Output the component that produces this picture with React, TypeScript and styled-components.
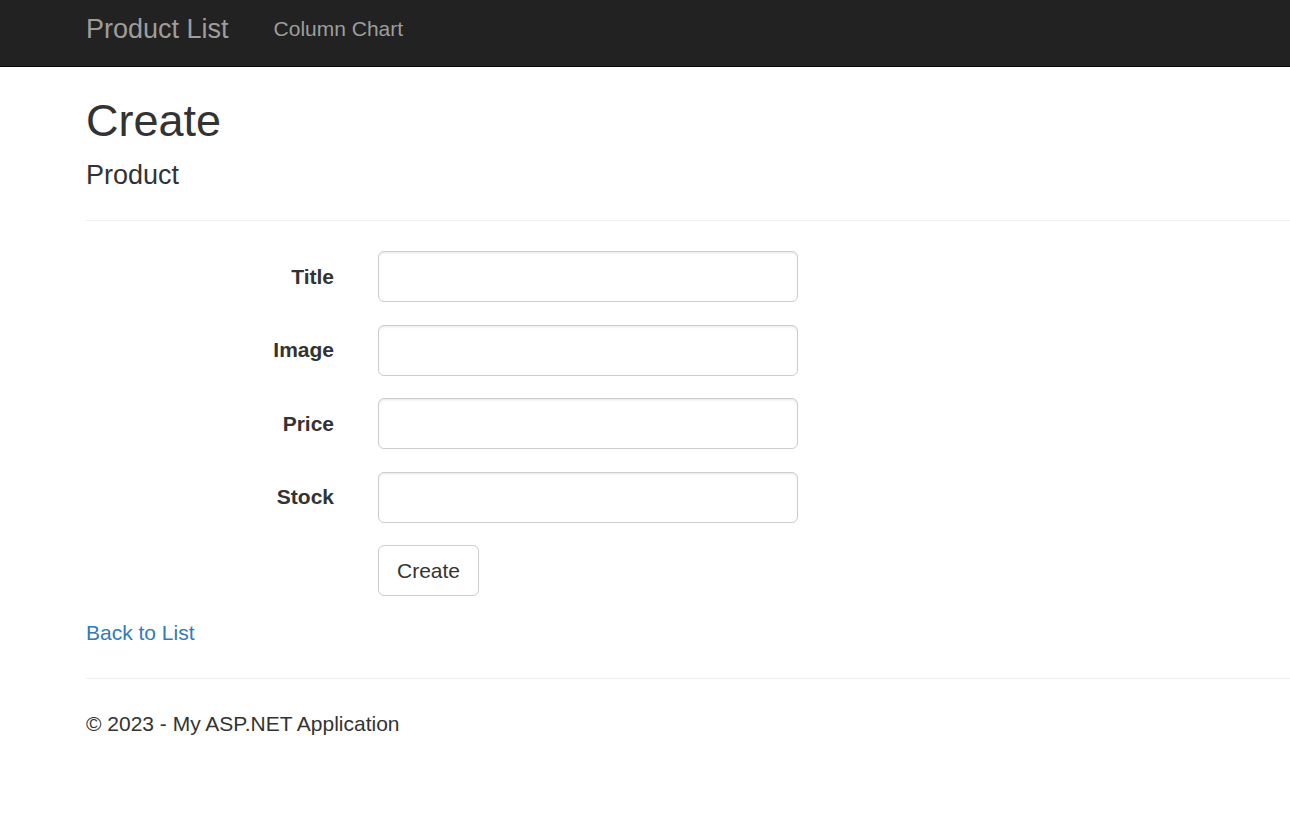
import React from "react";
import styled, { createGlobalStyle } from "styled-components";

const GlobalStyle = createGlobalStyle`
  html, body {
    margin: 0;
    padding: 0;
    background: #fff;
    overflow: hidden;
  }
  body {
    font-family: "Liberation Sans", Arial, Helvetica, sans-serif;
    font-size: 21px;
    line-height: 30px;
    color: #333;
  }
  * { box-sizing: border-box; }
`;

const Navbar = styled.nav`
  height: 67px;
  background: #222;
  border-bottom: 1px solid #080808;
`;

const NavContainer = styled.div`
  display: flex;
  align-items: flex-start;
  padding: 14px 0 0 86px;
`;

const Brand = styled.a`
  font-size: 27px;
  line-height: 30px;
  color: #9d9d9d;
  text-decoration: none;
  margin-right: 45px;
`;

const NavLink = styled.a`
  font-size: 21px;
  line-height: 30px;
  color: #9d9d9d;
  text-decoration: none;
`;

const Container = styled.main`
  padding-left: 86px;
`;

const PageTitle = styled.h2`
  margin: 29px 0 15px;
  font-size: 45px;
  line-height: 49.5px;
  font-weight: 500;
`;

const SubTitle = styled.h4`
  margin: 15px 0 15px;
  font-size: 27px;
  line-height: 29.7px;
  font-weight: 500;
`;

const Rule = styled.hr`
  margin: 30px 0;
  border: 0;
  border-top: 1px solid #eee;
  height: 0;
`;

const FormGroup = styled.div<{ $last?: boolean }>`
  display: grid;
  grid-template-columns: 248px 420px;
  column-gap: 44px;
  margin-bottom: ${(p) => (p.$last ? "21.5px" : "22.5px")};
`;

const Label = styled.label`
  text-align: right;
  font-weight: bold;
  padding-top: 10.5px;
  line-height: 30px;
`;

const Input = styled.input`
  height: 51px;
  width: 420px;
  padding: 9px 18px;
  font-family: inherit;
  font-size: 21px;
  color: #555;
  border: 1px solid #ccc;
  border-radius: 6px;
  box-shadow: inset 0 1.5px 1.5px rgba(0, 0, 0, 0.075);
  background: #fff;
  outline: none;
`;

const Button = styled.button`
  justify-self: start;
  height: 51px;
  padding: 9px 18px;
  font-family: inherit;
  font-size: 21px;
  line-height: 30px;
  color: #333;
  background: #fff;
  border: 1px solid #ccc;
  border-radius: 6px;
  cursor: pointer;
`;

const LinkRow = styled.div`
  line-height: 30px;
`;

const BackLink = styled.a`
  color: #337ab7;
  text-decoration: none;
`;

const Footer = styled.footer`
  p {
    margin: 0 0 15px;
  }
`;

const fields = ["Title", "Image", "Price", "Stock"];

export default function App() {
  return (
    <>
      <GlobalStyle />
      <Navbar>
        <NavContainer>
          <Brand href="#">Product List</Brand>
          <NavLink href="#">Column Chart</NavLink>
        </NavContainer>
      </Navbar>
      <Container>
        <PageTitle>Create</PageTitle>
        <SubTitle>Product</SubTitle>
        <Rule />
        <form onSubmit={(e) => e.preventDefault()}>
          {fields.map((f) => (
            <FormGroup key={f}>
              <Label htmlFor={f}>{f}</Label>
              <Input id={f} type="text" />
            </FormGroup>
          ))}
          <FormGroup $last>
            <span />
            <Button type="submit">Create</Button>
          </FormGroup>
        </form>
        <LinkRow>
          <BackLink href="#">Back to List</BackLink>
        </LinkRow>
        <Rule />
        <Footer>
          <p>© 2023 - My ASP.NET Application</p>
        </Footer>
      </Container>
    </>
  );
}
